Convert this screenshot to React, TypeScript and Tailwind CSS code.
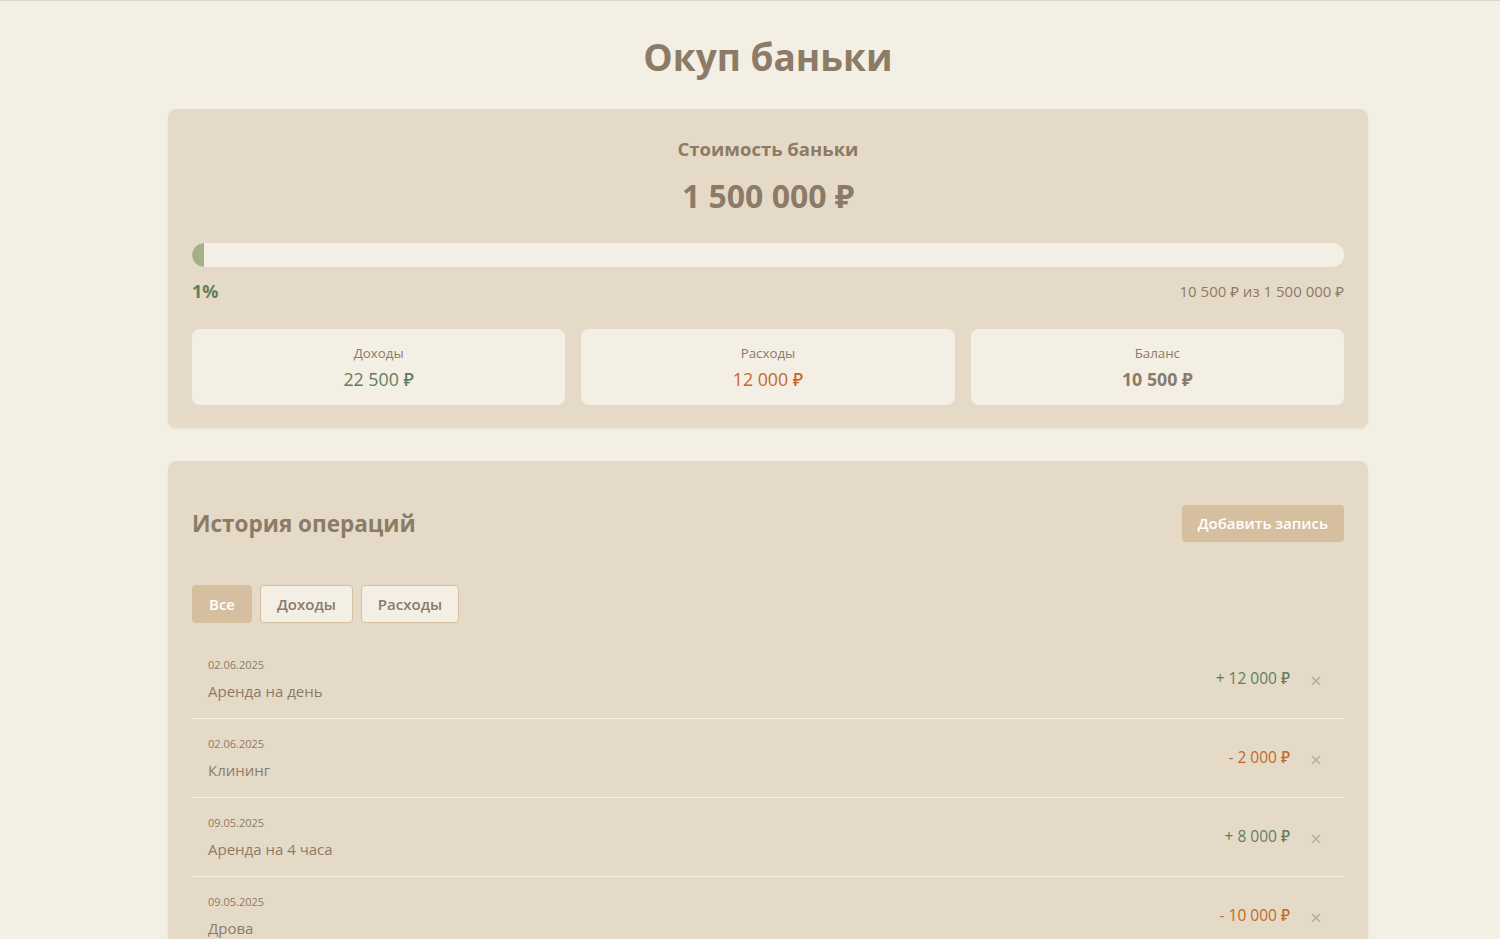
import React from "react";

const ops = [
  { date: "02.06.2025", name: "Аренда на день", amount: "+ 12 000 ₽", inc: true },
  { date: "02.06.2025", name: "Клининг", amount: "- 2 000 ₽", inc: false },
  { date: "09.05.2025", name: "Аренда на 4 часа", amount: "+ 8 000 ₽", inc: true },
  { date: "09.05.2025", name: "Дрова", amount: "- 10 000 ₽", inc: false },
];

export default function App() {
  return (
    <div
      className="min-h-[939px] bg-[#f4efe4] border-t border-[#d9d5cb] text-[#8b7b67]"
      style={{ fontFamily: '"Open Sans", "Noto Sans", sans-serif' }}
    >
      <div className="w-[1200px] ml-[168px]">
        <h1 className="text-center text-[37px] leading-[48px] font-bold pt-[32px] mb-[28px] text-[#8b7b67]">
          Окуп баньки
        </h1>

        <section className="bg-[#e5dac8] rounded-lg px-6 pt-[26px] pb-[23px] shadow-[0_1px_3px_rgba(0,0,0,0.06)]">
          <div className="text-center text-[18.5px] leading-[28px] font-bold">Стоимость баньки</div>
          <div className="text-center text-[32px] leading-[40px] font-bold mt-[13px]">1 500 000 ₽</div>
          <div className="mt-[27px] h-6 rounded-full bg-[#f4efe5] overflow-hidden">
            <div className="h-full bg-[#a3b18a] rounded-l-full" style={{ width: "1%" }} />
          </div>
          <div className="flex justify-between items-center mt-[12px]">
            <span className="text-[18px] leading-[24px] font-bold text-[#5f7f5c]">1%</span>
            <span className="text-[15px] leading-[20px] text-[#8b7b67]">10 500 ₽ из 1 500 000 ₽</span>
          </div>
          <div className="grid grid-cols-3 gap-4 mt-[26px]">
            <div className="bg-[#f4efe5] rounded-lg h-[76px] flex flex-col items-center justify-center">
              <div className="text-[13.3px] leading-[18px]">Доходы</div>
              <div className="text-[17.8px] leading-[24px] font-medium text-[#5f7f5c] mt-[5px]">22 500 ₽</div>
            </div>
            <div className="bg-[#f4efe5] rounded-lg h-[76px] flex flex-col items-center justify-center">
              <div className="text-[13.3px] leading-[18px]">Расходы</div>
              <div className="text-[17.8px] leading-[24px] font-medium text-[#c3692b] mt-[5px]">12 000 ₽</div>
            </div>
            <div className="bg-[#f4efe5] rounded-lg h-[76px] flex flex-col items-center justify-center">
              <div className="text-[13.3px] leading-[18px]">Баланс</div>
              <div className="text-[17.8px] leading-[24px] font-bold text-[#8b7b67] mt-[5px]">10 500 ₽</div>
            </div>
          </div>
        </section>

        <section className="bg-[#e5dac8] rounded-lg px-6 pt-[43px] mt-[33px] shadow-[0_1px_3px_rgba(0,0,0,0.06)]">
          <div className="flex justify-between items-center">
            <h2 className="text-[22.5px] leading-[36px] font-bold mt-[2px]">История операций</h2>
            <button className="bg-[#d5bf9f] text-white text-[15px] font-semibold rounded h-[37px] px-4">
              Добавить запись
            </button>
          </div>
          <div className="flex gap-2 mt-[43px]">
            <button className="h-[38px] px-4 rounded bg-[#d5bf9f] text-white text-[15px] font-semibold border border-[#d5bf9f]">
              Все
            </button>
            <button className="h-[38px] px-4 rounded bg-[#f4efe5] text-[#8b7b67] text-[15px] font-semibold border border-[#d5bf9f]">
              Доходы
            </button>
            <button className="h-[38px] px-4 rounded bg-[#f4efe5] text-[#8b7b67] text-[15px] font-semibold border border-[#d5bf9f]">
              Расходы
            </button>
          </div>
          <div className="mt-[17px]">
            {ops.map((o, i) => (
              <div key={i} className="flex items-center justify-between px-4 py-4 border-b border-[#f4efe5]">
                <div>
                  <div className="text-[11px] leading-[18px]">{o.date}</div>
                  <div className="text-[15px] leading-[22px] mt-[6px]">{o.name}</div>
                </div>
                <div className="flex items-center">
                  <span className={"text-[15.5px] font-medium " + (o.inc ? "text-[#5f7f5c]" : "text-[#c3692b]")}>
                    {o.amount}
                  </span>
                  <span className="ml-[19px] mr-[5px] w-[14px] text-center text-[20px] leading-none text-[#b7ab98] mt-[3px]">×</span>
                </div>
              </div>
            ))}
          </div>
        </section>
      </div>
    </div>
  );
}
